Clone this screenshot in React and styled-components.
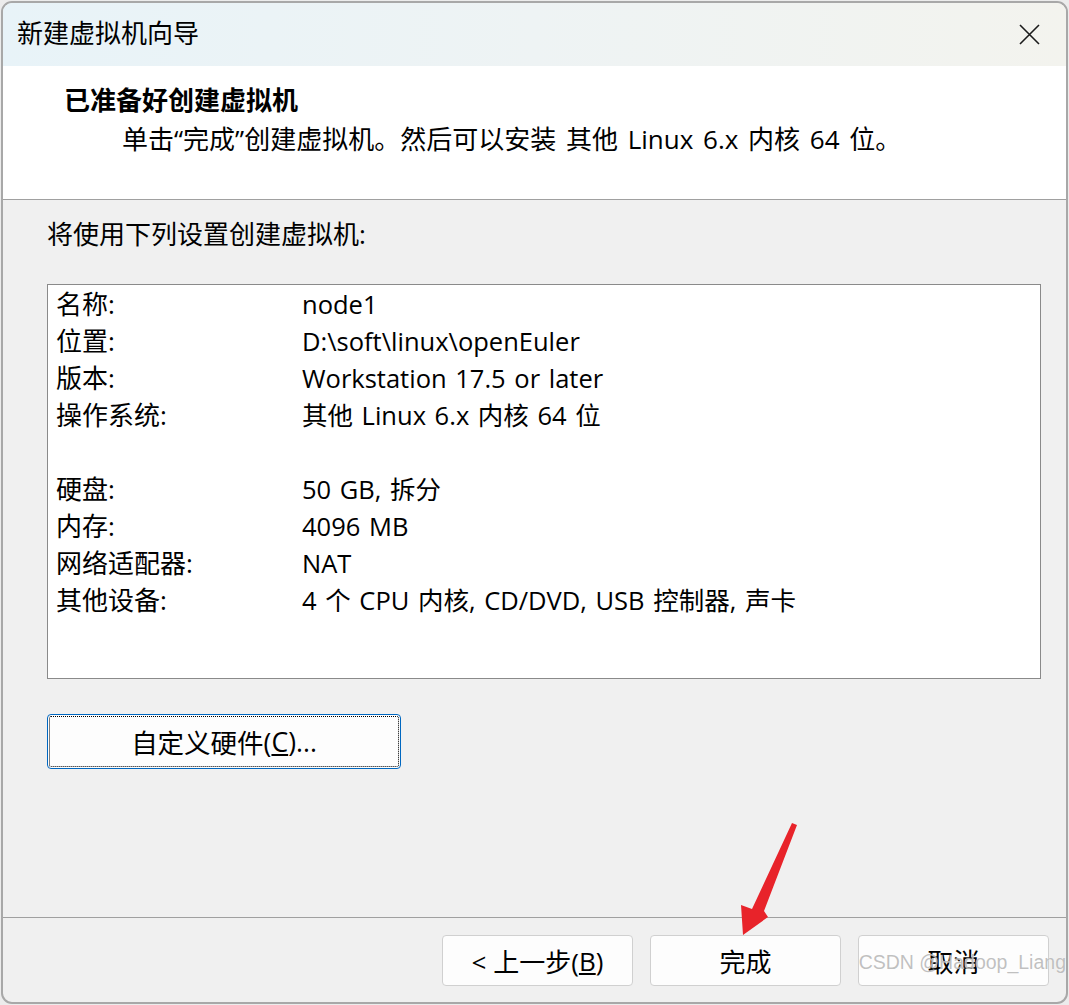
import React from "react";
import styled, { createGlobalStyle } from "styled-components";

const GlobalStyle = createGlobalStyle`
  html, body {
    margin: 0;
    padding: 0;
    background: #ececec;
  }
  body {
    font-family: "Open Sans", "Noto Sans CJK SC", sans-serif;
    color: #000;
  }
`;

const Page = styled.div`
  position: relative;
  width: 1069px;
  height: 1005px;
  padding: 1px 0 0 1px;
  box-sizing: border-box;
`;

const Window = styled.div`
  position: relative;
  width: 1067px;
  height: 1003px;
  box-sizing: border-box;
  border: 2px solid #a8a8a8;
  border-radius: 11px;
  overflow: hidden;
  display: flex;
  flex-direction: column;
  background: #f0f0f0;
`;

const TitleBar = styled.div`
  height: 63px;
  flex: none;
  display: flex;
  align-items: center;
  justify-content: space-between;
  padding: 0 26px 0 14px;
  background: linear-gradient(90deg, #e8f3f8 0%, #eef3f4 50%, #f3f3ee 100%);
`;

const Title = styled.div`
  font-size: 26px;
  line-height: 1;
  margin-top: -3px;
`;

const CloseButton = styled.button`
  width: 22px;
  height: 22px;
  padding: 0;
  border: none;
  background: transparent;
  display: flex;
  align-items: center;
  justify-content: center;
  margin-top: -1px;
`;

const Header = styled.div`
  height: 134px;
  flex: none;
  box-sizing: border-box;
  background: #fff;
  border-bottom: 1px solid #a0a0a0;
  padding: 17px 0 0 61px;
`;

const Heading = styled.div`
  font-size: 26px;
  font-weight: 700;
  line-height: 34px;
`;

const SubHeading = styled.div`
  font-size: 26px;
  line-height: 34px;
  word-spacing: 3px;
  margin: 5px 0 0 58px;
`;

const Body = styled.div`
  height: 718px;
  flex: none;
  box-sizing: border-box;
  border-bottom: 1px solid #a0a0a0;
  padding: 16px 0 0 44px;
`;

const Intro = styled.div`
  font-size: 26px;
  line-height: 37px;
`;

const SummaryBox = styled.div`
  margin-top: 31px;
  width: 994px;
  height: 395px;
  box-sizing: border-box;
  background: #fff;
  border: 1px solid #8a8a8a;
  padding: 1px 0 0 8px;
`;

const Row = styled.div`
  display: grid;
  grid-template-columns: 246px 1fr;
  height: 37px;
  font-size: 26px;
  line-height: 37px;
  white-space: nowrap;
`;

const Value = styled.span`
  font-size: 25.5px;
  word-spacing: 2px;
`;

const Button = styled.button`
  box-sizing: border-box;
  background: #fdfdfd;
  border: 1px solid ${(p) => (p.$focused ? "#0067c0" : "#d0d0d0")};
  border-radius: 4px;
  font-family: "Open Sans", "Noto Sans CJK SC", sans-serif;
  font-size: 26px;
  color: #000;
  padding: 0;
  display: flex;
  align-items: center;
  justify-content: center;
  outline: ${(p) => (p.$focused ? "1px dotted #000" : "none")};
  outline-offset: -3px;
`;

const CustomizeButton = styled(Button)`
  margin-top: 35px;
  width: 354px;
  height: 55px;
  font-size: 26.5px;
`;

const Footer = styled.div`
  flex: 1;
  display: flex;
  justify-content: flex-end;
  gap: 17px;
  padding: 17px 17px 0 0;
`;

const FooterButton = styled(Button)`
  width: 191px;
  height: 51px;
`;

const Watermark = styled.div`
  position: absolute;
  right: 3px;
  bottom: 31px;
  font-family: "Liberation Sans", Arial, sans-serif;
  font-size: 19.5px;
  color: rgba(150, 150, 150, 0.6);
  text-shadow: 0 0 1px rgba(255, 255, 255, 0.9);
  pointer-events: none;
`;

const Annotation = styled.svg`
  position: absolute;
  left: 0;
  top: 0;
  pointer-events: none;
`;

const rows = [
  ["名称:", "node1"],
  ["位置:", "D:\\soft\\linux\\openEuler"],
  ["版本:", "Workstation 17.5 or later"],
  ["操作系统:", "其他 Linux 6.x 内核 64 位"],
  ["", ""],
  ["硬盘:", "50 GB, 拆分"],
  ["内存:", "4096 MB"],
  ["网络适配器:", "NAT"],
  ["其他设备:", "4 个 CPU 内核, CD/DVD, USB 控制器, 声卡"],
];

export default function App() {
  return (
    <Page>
      <GlobalStyle />
      <Window>
        <TitleBar>
          <Title>新建虚拟机向导</Title>
          <CloseButton aria-label="关闭">
            <svg width="21" height="21" viewBox="0 0 21 21">
              <path
                d="M1 1 L20 20 M20 1 L1 20"
                stroke="#1b1b1b"
                strokeWidth="1.6"
                fill="none"
              />
            </svg>
          </CloseButton>
        </TitleBar>

        <Header>
          <Heading>已准备好创建虚拟机</Heading>
          <SubHeading>
            单击“完成”创建虚拟机。然后可以安装 其他 Linux 6.x 内核 64 位。
          </SubHeading>
        </Header>

        <Body>
          <Intro>将使用下列设置创建虚拟机:</Intro>
          <SummaryBox>
            {rows.map(([label, value], i) => (
              <Row key={i}>
                <span>{label}</span>
                <Value>{value}</Value>
              </Row>
            ))}
          </SummaryBox>
          <CustomizeButton $focused>
            自定义硬件(<u>C</u>)...
          </CustomizeButton>
        </Body>

        <Footer>
          <FooterButton>
            &lt; 上一步(<u>B</u>)
          </FooterButton>
          <FooterButton>完成</FooterButton>
          <FooterButton>取消</FooterButton>
        </Footer>
      </Window>

      <Annotation width="1069" height="1005" viewBox="0 0 1069 1005">
        <polygon
          points="792,823 797,825 764,911 768,917 743,935 741,905 752,909"
          fill="#e8232a"
        />
      </Annotation>
      <Watermark>CSDN @Hadoop_Liang</Watermark>
    </Page>
  );
}
